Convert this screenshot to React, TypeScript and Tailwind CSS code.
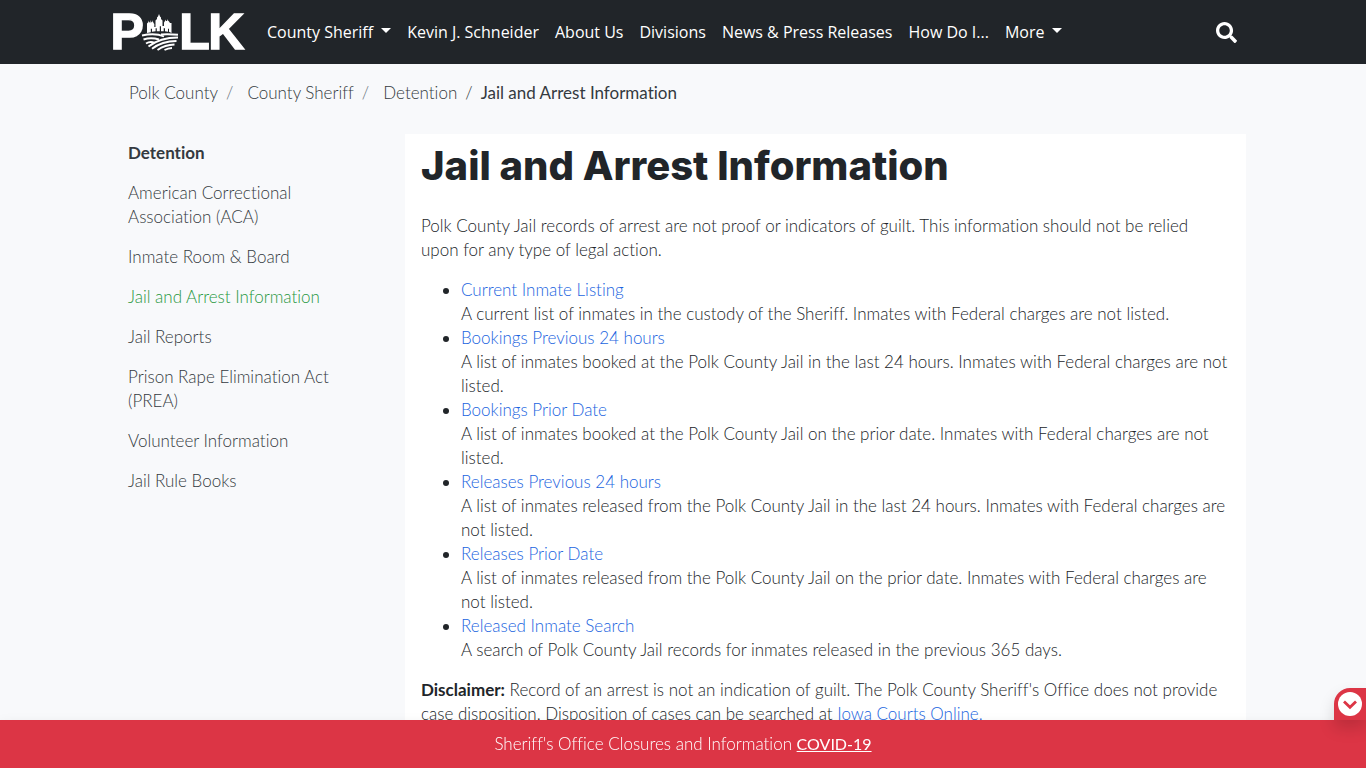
import { FaSearch } from "react-icons/fa";

const navItems = [
  { label: "County Sheriff", menu: true },
  { label: "Kevin J. Schneider", menu: false },
  { label: "About Us", menu: false },
  { label: "Divisions", menu: false },
  { label: "News & Press Releases", menu: false },
  { label: "How Do I...", menu: false },
  { label: "More", menu: true },
];

const sideItems = [
  "American Correctional Association (ACA)",
  "Inmate Room & Board",
  "Jail and Arrest Information",
  "Jail Reports",
  "Prison Rape Elimination Act (PREA)",
  "Volunteer Information",
  "Jail Rule Books",
];

const records = [
  {
    title: "Current Inmate Listing",
    text: "A current list of inmates in the custody of the Sheriff. Inmates with Federal charges are not listed.",
  },
  {
    title: "Bookings Previous 24 hours",
    text: "A list of inmates booked at the Polk County Jail in the last 24 hours. Inmates with Federal charges are not listed.",
  },
  {
    title: "Bookings Prior Date",
    text: "A list of inmates booked at the Polk County Jail on the prior date. Inmates with Federal charges are not listed.",
  },
  {
    title: "Releases Previous 24 hours",
    text: "A list of inmates released from the Polk County Jail in the last 24 hours. Inmates with Federal charges are not listed.",
  },
  {
    title: "Releases Prior Date",
    text: "A list of inmates released from the Polk County Jail on the prior date. Inmates with Federal charges are not listed.",
  },
  {
    title: "Released Inmate Search",
    text: "A search of Polk County Jail records for inmates released in the previous 365 days.",
  },
];

function Logo() {
  return (
    <svg viewBox="0 0 130 36" className="h-9 w-[130px] overflow-visible" role="img" aria-label="Polk">
      <g
        fill="#fff"
        stroke="#fff"
        strokeWidth="1.400"
        className="font-['Liberation_Sans',sans-serif] font-bold"
        fontSize="50"
      >
        <text x="-2.600" y="35.300">P</text>
        <text x="66.300" y="35.300">L</text>
        <text x="95.300" y="35.300">K</text>
      </g>
      {/* Skyline */}
      <path
        fill="#fff"
        d="M34 19V9.500l1.500-1.500V6.500l1 2h1V6l1 2.500 1-1V6l1 3 .8 1v3h1.200V6.500l1.500-1.500V3.500l1-1 1-2.500 1 2.500 1 1V5l1.500 1.500V12h1.500V8.500l1-1.500V5.500l1 1.500h1l1-2V6.500l1 1 1 1.500h1.500V19l-2.500-1.200v-3h-1v3l-3-.5v-3h-1.300v3h-2.700v-5h-1.200v5h-3v-3h-1.200v3l-3.600.5v-3h-1.200v3.500z"
      />
      {/* Fields */}
      <g fill="none" stroke="#fff" strokeWidth="1.900">
        <path d="M29 21.500Q42 18.500 51 22.500" />
        <path d="M48 20.500Q56 20 65 20.800" />
        <path d="M30.500 25.500Q38 23 46 25.500" />
        <path d="M33 29.500Q37 27 41.500 28.800" />
        <path d="M35.500 32.500Q47 23.500 65 23.500" />
        <path d="M39 34.800Q49 27 63.500 27" />
        <path d="M44.500 36Q52 30.800 61.500 30.500" />
        <path d="M51.500 36Q55 34.200 59 34" />
      </g>
    </svg>
  );
}

function Crumb({ children, last = false }: { children: string; last?: boolean }) {
  return (
    <li className="flex">
      <a href="#" className="text-[#343a40]">{children}</a>
      <span aria-hidden="true" className={last ? "px-2 text-[#343a40]" : "pr-[14px] pl-2 text-[#6c757d]"}>/</span>
    </li>
  );
}

export default function App() {
  return (
    <div className="min-h-screen bg-[#f8f9fb] pb-12 font-['Lato',sans-serif] text-[17px] leading-6 font-light text-[#212529] [font-variant-ligatures:no-common-ligatures]">
      <header className="bg-[#212529] text-white">
        <div className="mx-auto flex h-16 max-w-[1140px] items-center">
          <a href="#" className="mr-4">
            <Logo />
          </a>
          <nav className="flex grow items-center font-['Open_Sans',sans-serif] text-base font-normal">
            {navItems.map((item) =>
              item.menu ? (
                <button key={item.label} type="button" className="flex cursor-pointer items-center gap-2 px-2">
                  {item.label}
                  <svg viewBox="0 0 10 5" className="mb-1 h-[5px] w-[10px]" fill="currentColor" aria-hidden="true">
                    <path d="M0 0h10L5 5z" />
                  </svg>
                </button>
              ) : (
                <a key={item.label} href="#" className="px-2 whitespace-nowrap">
                  {item.label}
                </a>
              ),
            )}
          </nav>
          <button type="button" aria-label="Search" className="mr-4 cursor-pointer">
            <FaSearch className="size-[21px]" />
          </button>
        </div>
      </header>

      <div className="mx-auto max-w-[1140px]">
        <nav aria-label="Breadcrumb" className="px-4 pt-[17px] pb-[29px]">
          <ol className="flex">
            <Crumb>Polk County</Crumb>
            <Crumb>County Sheriff</Crumb>
            <Crumb last>Detention</Crumb>
            <li aria-current="page" className="font-normal text-[#343a40]">Jail and Arrest Information</li>
          </ol>
        </nav>

        <div className="flex items-start pr-[7px] pl-[15px]">
          <aside className="w-[277px] shrink-0 pt-[7px] pr-10 text-[#343a40]">
            <h2 className="font-bold">Detention</h2>
            <ul className="mt-4 flex flex-col gap-4">
              {sideItems.map((label) => (
                <li key={label}>
                  <a
                    href="#"
                    className={label === "Jail and Arrest Information" ? "block text-[#28983f]" : "block"}
                  >
                    {label}
                  </a>
                </li>
              ))}
            </ul>
          </aside>

          <main className="grow bg-white px-4 pt-2 pb-8">
            <h1 className="mb-6 font-['Inter',sans-serif] text-[40px] leading-[48px] font-extrabold">
              Jail and Arrest Information
            </h1>
            <p className="mb-4">
              Polk County Jail records of arrest are not proof or indicators of guilt. This information should not be
              relied upon for any type of legal action.
            </p>
            <ul className="mb-4 list-disc pl-10">
              {records.map((record) => (
                <li key={record.title}>
                  <a href="#" className="text-[#1a64e0]">{record.title}</a>
                  <p>{record.text}</p>
                </li>
              ))}
            </ul>
            <p>
              <strong className="font-bold">Disclaimer:</strong> Record of an arrest is not an indication of guilt. The
              Polk County Sheriff's Office does not provide case disposition. Disposition of cases can be searched at{" "}
              <a href="#" className="text-[#1a64e0]">Iowa Courts Online.</a>
            </p>
          </main>
        </div>
      </div>

      <div className="fixed inset-x-0 bottom-0 bg-[#dc3545] py-3 text-center text-white shadow-[0_8px_16px_rgba(0,0,0,0.15)]">
        Sheriff's Office Closures and Information{" "}
        <a href="#" className="text-base font-normal underline">COVID-19</a>
        <button
          type="button"
          aria-label="Hide notice"
          className="absolute right-0 bottom-full flex size-8 cursor-pointer items-center justify-center rounded-tl-2xl bg-[#dc3545] shadow-[0_8px_16px_rgba(0,0,0,0.15)]"
        >
          <svg viewBox="0 0 24 24" className="size-6" aria-hidden="true">
            <circle cx="12" cy="12" r="12" fill="#fff" />
            <path d="M6 9.500l6 5.800 6-5.800" fill="none" stroke="#dc3545" strokeWidth="2.800" />
          </svg>
        </button>
      </div>
    </div>
  );
}
